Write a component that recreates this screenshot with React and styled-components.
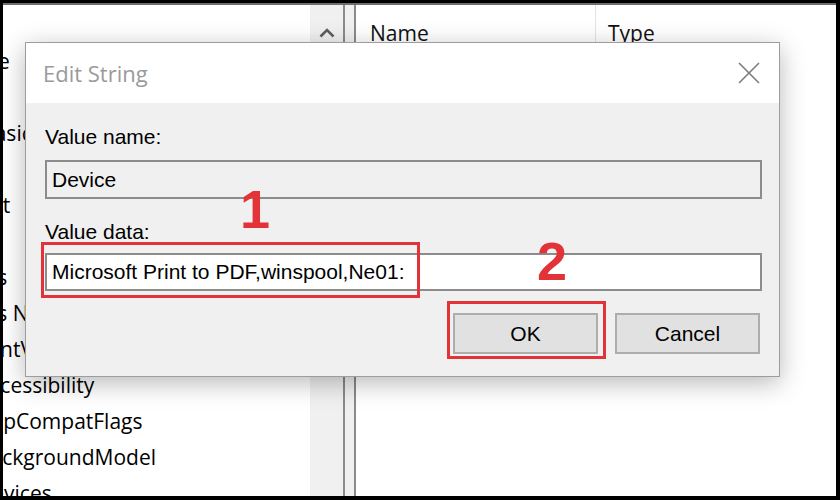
import React from "react";
import styled, { createGlobalStyle } from "styled-components";

const GlobalStyle = createGlobalStyle`
  html, body { margin: 0; padding: 0; background: #000; }
  * { box-sizing: border-box; }
`;

const UI_FONT = `"Open Sans", "Noto Sans", sans-serif`;
const DLG_FONT = `"Liberation Sans", Arial, sans-serif`;
const RED = "#e23338";

const Frame = styled.div`
  position: relative;
  width: 840px;
  height: 500px;
  background: #000;
  padding: 3px 4px 4px 3px;
`;

const Window = styled.div`
  display: flex;
  height: 100%;
  background: #fff;
  border-top: 2px solid #6e6e6e;
  overflow: hidden;
`;

const TreePane = styled.div`
  width: 307px;
  overflow: hidden;
  padding-top: 2px;
`;

/* tree content scrolled horizontally to the right */
const TreeList = styled.ul`
  list-style: none;
  margin: 0 0 0 -110px;
  padding: 0;
`;

const TreeRow = styled.li`
  height: 36px;
  line-height: 36px;
  padding-left: ${(p) => [0, 25, 52, 84][p.$level]}px;
  font-family: ${UI_FONT};
  font-size: 21px;
  color: #000;
  white-space: nowrap;
`;

const ScrollCol = styled.div`
  width: 33px;
  background: #f0f0f0;
  display: flex;
  justify-content: center;
  padding-top: 23px;
`;

const Splitter = styled.div`
  width: 13px;
  background: #f0f0f0;
  border-left: 2px solid #8a8a8a;
  border-right: 2px solid #8a8a8a;
`;

const ListPane = styled.div`
  flex: 1;
  background: #fff;
`;

const Header = styled.div`
  display: flex;
  height: 56px;
`;

const HeaderCell = styled.div`
  width: ${(p) => p.$w || "auto"};
  padding-left: ${(p) => p.$pad}px;
  line-height: 56px;
  font-family: ${UI_FONT};
  font-size: 21px;
  color: #111;
  border-right: ${(p) => (p.$sep ? "1px solid #e3e3e3" : "none")};
`;

const Dialog = styled.div`
  position: absolute;
  left: 25px;
  top: 42px;
  width: 755px;
  height: 335px;
  display: flex;
  flex-direction: column;
  border: 1px solid #9d9d9d;
  background: #f0f0f0;
  box-shadow: 0 6px 24px rgba(0, 0, 0, 0.28);
`;

const TitleBar = styled.div`
  height: 60px;
  flex: none;
  background: #fff;
  display: flex;
  align-items: center;
  justify-content: space-between;
  padding: 0 19px 0 17px;
`;

const Title = styled.span`
  font-family: ${UI_FONT};
  font-size: 22px;
  color: #9a9a9a;
`;

const Body = styled.div`
  flex: 1;
  padding: 22px 17px 0 19px;
  display: flex;
  flex-direction: column;
`;

const Label = styled.div`
  font-family: ${DLG_FONT};
  font-size: 21px;
  line-height: 24px;
  color: #000;
  margin-top: ${(p) => p.$mt || 0}px;
`;

const FieldWrap = styled.div`
  position: relative;
  margin-top: ${(p) => p.$mt}px;
`;

const Field = styled.div`
  height: ${(p) => p.$h}px;
  border: 2px solid #8c8c8c;
  background: ${(p) => (p.$readonly ? "#f0f0f0" : "#fff")};
  display: flex;
  align-items: center;
  padding-left: 5px;
  font-family: ${DLG_FONT};
  font-size: 21px;
  color: #000;
`;

const ButtonRow = styled.div`
  display: flex;
  justify-content: flex-end;
  gap: 17px;
  margin-top: 22px;
  padding-right: 2px;
`;

const ButtonWrap = styled.div`
  position: relative;
`;

const Button = styled.div`
  width: 145px;
  height: 41px;
  display: flex;
  align-items: center;
  justify-content: center;
  background: #e1e1e1;
  border: 2px solid #adadad;
  font-family: ${DLG_FONT};
  font-size: 21px;
  color: #000;
`;

/* red callout rectangle drawn over a control */
const Callout = styled.div`
  position: absolute;
  left: ${(p) => p.$l}px;
  top: ${(p) => p.$t}px;
  width: ${(p) => p.$w}px;
  height: ${(p) => p.$h}px;
  border: 3px solid ${RED};
  pointer-events: none;
`;

const StepNumber = styled.div`
  position: absolute;
  left: ${(p) => p.$x}px;
  top: ${(p) => p.$y}px;
  font-family: ${DLG_FONT};
  font-weight: 700;
  font-size: 54px;
  line-height: 1;
  color: ${RED};
`;

const treeItems = [
  ["Speech", 1],
  ["Template", 1],
  ["Shell", 1],
  ["Visual Basic", 1],
  ["UEV", 1],
  ["Transient", 1],
  ["Wallet", 1],
  ["Windows", 1],
  ["Windows NT", 1],
  ["CurrentVersion", 2],
  ["Accessibility", 3],
  ["AppCompatFlags", 3],
  ["BackgroundModel", 3],
  ["Devices", 3],
];

const ChevronUp = () => (
  <svg width="16" height="10" viewBox="0 0 16 10">
    <polyline points="1.5,8.5 8,2 14.5,8.5" fill="none" stroke="#5f5f5f" strokeWidth="2.6" />
  </svg>
);

const CloseIcon = () => (
  <svg width="22" height="22" viewBox="0 0 22 22">
    <path d="M1 1 L21 21 M21 1 L1 21" stroke="#7c7c7c" strokeWidth="1.6" fill="none" />
  </svg>
);

export default function App() {
  return (
    <>
      <GlobalStyle />
      <Frame>
        <Window>
          <TreePane>
            <TreeList>
              {treeItems.map(([name, level]) => (
                <TreeRow key={name} $level={level}>
                  {name}
                </TreeRow>
              ))}
            </TreeList>
          </TreePane>
          <ScrollCol>
            <ChevronUp />
          </ScrollCol>
          <Splitter />
          <ListPane>
            <Header>
              <HeaderCell $w="240px" $pad={14} $sep>
                Name
              </HeaderCell>
              <HeaderCell $pad={12}>Type</HeaderCell>
            </Header>
          </ListPane>
        </Window>

        <Dialog>
          <TitleBar>
            <Title>Edit String</Title>
            <CloseIcon />
          </TitleBar>
          <Body>
            <Label>Value name:</Label>
            <FieldWrap $mt={11}>
              <Field $h={39} $readonly>
                Device
              </Field>
            </FieldWrap>
            <Label $mt={21}>Value data:</Label>
            <FieldWrap $mt={9}>
              <Field $h={38}>Microsoft Print to PDF,winspool,Ne01:</Field>
              <Callout $l={-4} $t={-11} $w={379} $h={56} />
            </FieldWrap>
            <ButtonRow>
              <ButtonWrap>
                <Button>OK</Button>
                <Callout $l={-6} $t={-12} $w={159} $h={58} />
              </ButtonWrap>
              <Button>Cancel</Button>
            </ButtonRow>
          </Body>
        </Dialog>

        <StepNumber $x={240} $y={182}>1</StepNumber>
        <StepNumber $x={537} $y={234}>2</StepNumber>
      </Frame>
    </>
  );
}
